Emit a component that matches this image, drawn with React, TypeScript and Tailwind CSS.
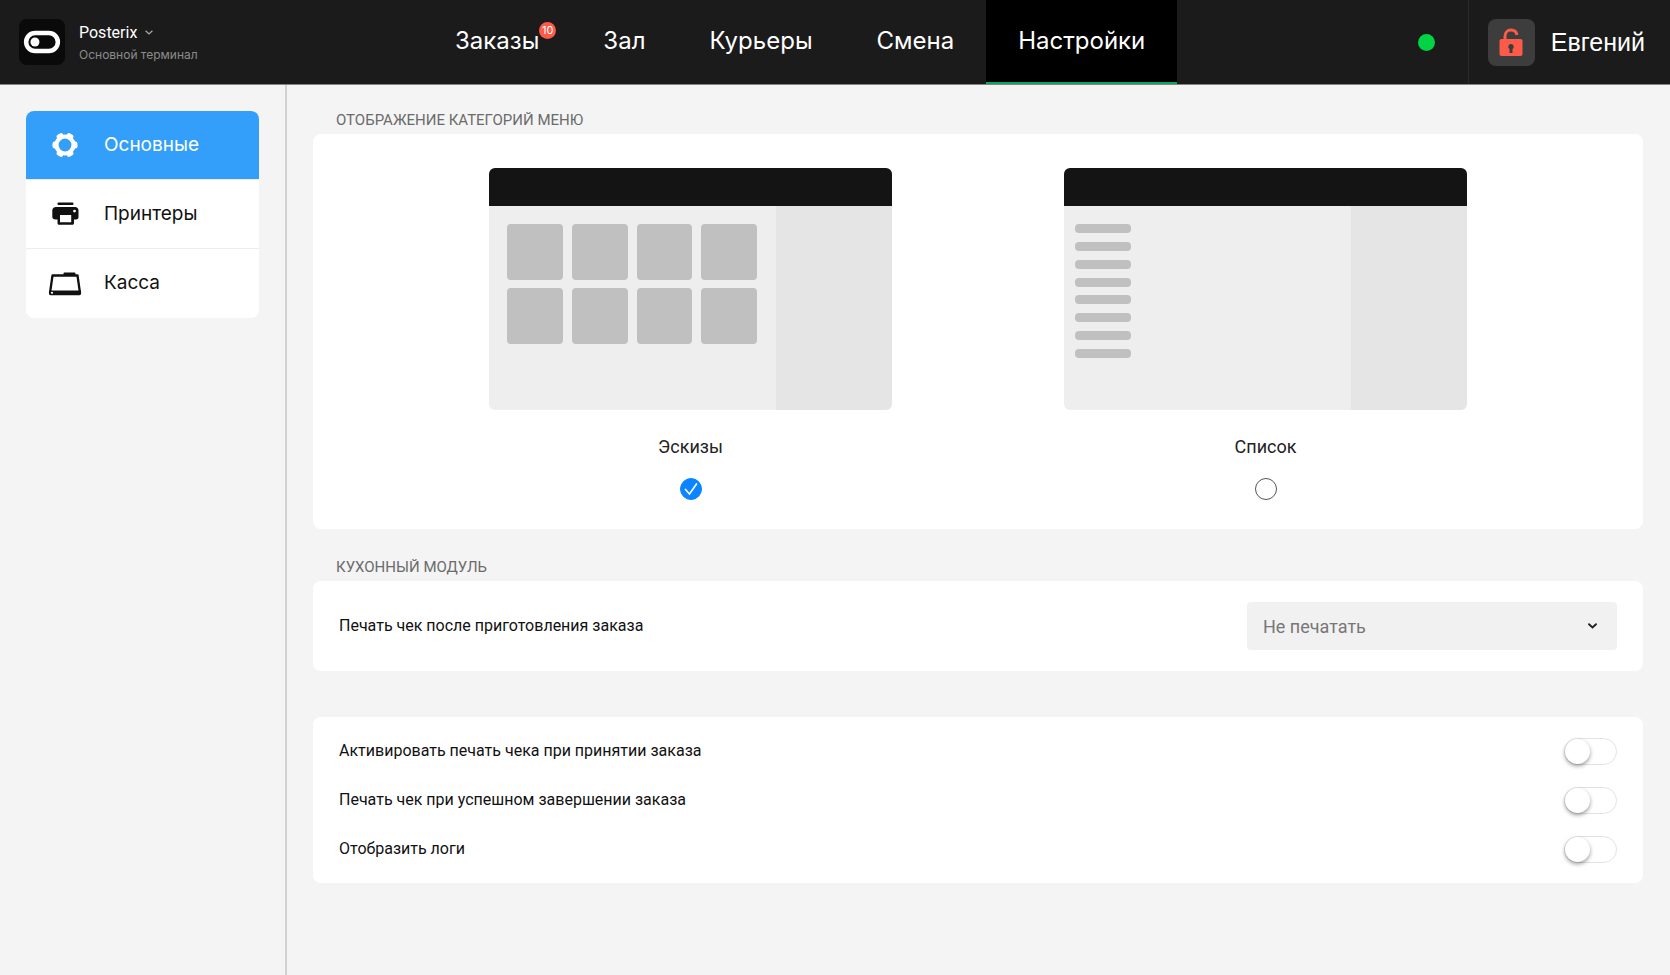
import { useState } from 'react';
import clsx from 'clsx';

const TABS = [
  { id: 'orders', label: 'Заказы', badge: 10 },
  { id: 'hall', label: 'Зал' },
  { id: 'couriers', label: 'Курьеры' },
  { id: 'shift', label: 'Смена' },
  { id: 'settings', label: 'Настройки' },
];

const SECTIONS = [
  { id: 'general', label: 'Основные', Icon: GearIcon },
  { id: 'printers', label: 'Принтеры', Icon: PrinterIcon },
  { id: 'cashbox', label: 'Касса', Icon: CashboxIcon },
];

const TOGGLES = [
  { id: 'print-on-accept', label: 'Активировать печать чека при принятии заказа' },
  { id: 'print-on-finish', label: 'Печать чек при успешном завершении заказа' },
  { id: 'show-logs', label: 'Отобразить логи' },
];

export default function App() {
  return (
    <div className="flex min-h-screen flex-col bg-[#f4f4f4] font-['Roboto','Noto_Sans',sans-serif] text-[#111]">
      <Header />
      <div className="flex flex-1">
        <Sidebar />
        <Settings />
      </div>
    </div>
  );
}

function Header() {
  const [active, setActive] = useState('settings');

  return (
    <header className="flex h-[85px] items-stretch border-b border-[#858585] bg-[#1b1b1b] text-white">
      <div className="flex w-[423px] items-center gap-[14px] pl-[19px]">
        <LogoIcon />
        <div className="flex flex-col items-start pt-0.5">
          <button type="button" className="flex items-center gap-2 text-[16px] leading-6">
            Posterix
            <Chevron className="w-2 text-[#aaa]" />
          </button>
          <span className="font-['Inter',sans-serif] text-[12px] leading-5 text-[#8c8c8c]">Основной терминал</span>
        </div>
      </div>

      <nav className="flex font-['Inter','Noto_Sans',sans-serif]">
        {TABS.map((tab) => (
          <button
            key={tab.id}
            type="button"
            onClick={() => setActive(tab.id)}
            className={clsx(
              'border-b-2 px-8 text-[24px]',
              active === tab.id ? 'border-[#06a763] bg-black' : 'border-transparent'
            )}
          >
            <span className="relative">
              {tab.label}
              {tab.badge && (
                <span className="absolute -top-1 left-full flex size-[17px] items-center justify-center rounded-full bg-[#fb5b48] text-[11px] leading-none">
                  {tab.badge}
                </span>
              )}
            </span>
          </button>
        ))}
      </nav>

      <div className="ml-auto flex items-center">
        <span className="mr-[33px] size-[17px] rounded-full bg-[#00d445]" />
        <div className="flex h-full items-center gap-4 border-l border-[#292929] pr-[25px] pl-[19px]">
          <button
            type="button"
            aria-label="Заблокировать"
            className="flex size-[47px] items-center justify-center rounded-lg bg-[#3d3d3d]"
          >
            <LockIcon />
          </button>
          <span className="pt-0.5 font-['Liberation_Sans',Arial,sans-serif] text-[25px]">Евгений</span>
        </div>
      </div>
    </header>
  );
}

function Sidebar() {
  const [active, setActive] = useState('general');

  return (
    <aside className="w-[287px] shrink-0 border-r-2 border-[#d2d2d2] p-[26px]">
      <nav className="overflow-hidden rounded-lg bg-white font-['Inter','Noto_Sans',sans-serif]">
        {SECTIONS.map(({ id, label, Icon }) => (
          <button
            key={id}
            type="button"
            onClick={() => setActive(id)}
            className={clsx(
              'flex h-[69px] w-full items-center gap-[22px] border-[#ededed] pl-[22px] text-[19px] not-last:border-b',
              active === id ? 'border-[#339ffa] bg-[#339ffa] text-white' : 'text-[#111]'
            )}
          >
            <Icon />
            {label}
          </button>
        ))}
      </nav>
    </aside>
  );
}

function Settings() {
  const [view, setView] = useState('tiles');

  return (
    <main className="flex-1 pt-[21px] pr-[27px] pl-[26px]">
      <SectionTitle>Отображение категорий меню</SectionTitle>
      <div className="flex justify-center gap-[172px] rounded-lg bg-white pt-[34px] pb-[29px]">
        <ViewOption label="Эскизы" value="tiles" checked={view === 'tiles'} onChange={setView}>
          <div className="grid grid-cols-4 content-start gap-x-[9px] gap-y-2 pt-[18px] pr-[19px] pl-[18px]">
            {Array.from({ length: 8 }, (_, i) => (
              <div key={i} className="aspect-square rounded-sm bg-[#c0c0c0]" />
            ))}
          </div>
        </ViewOption>
        <ViewOption label="Список" value="list" checked={view === 'list'} onChange={setView}>
          <div className="flex h-[152px] flex-col justify-between pt-[18px] pl-[11px]">
            {Array.from({ length: 8 }, (_, i) => (
              <div key={i} className="h-[9px] w-14 rounded bg-[#c0c0c0]" />
            ))}
          </div>
        </ViewOption>
      </div>

      <div className="mt-6">
        <SectionTitle>Кухонный модуль</SectionTitle>
        <div className="flex items-center justify-between rounded-lg bg-white px-[26px] py-[21px]">
          <label htmlFor="print-after-cooking" className="text-[16px]">
            Печать чек после приготовления заказа
          </label>
          <div className="grid w-[370px] items-center">
            <select
              id="print-after-cooking"
              className="col-start-1 row-start-1 h-12 appearance-none rounded bg-[#f1f1f1] px-4 text-[18px] text-[#777]"
            >
              <option>Не печатать</option>
            </select>
            <Chevron className="pointer-events-none col-start-1 row-start-1 mr-5 w-[9px] justify-self-end text-[#222]" bold />
          </div>
        </div>
      </div>

      <div className="mt-[46px] flex flex-col gap-px rounded-lg bg-white px-[26px] py-[10px]">
        {TOGGLES.map((toggle) => (
          <div key={toggle.id} className="flex h-12 items-center justify-between">
            <label htmlFor={toggle.id} className="text-[16px]">
              {toggle.label}
            </label>
            <input
              id={toggle.id}
              type="checkbox"
              role="switch"
              className="flex h-[27px] w-[53px] appearance-none rounded-full border border-[#e2e2e2] bg-white before:size-[25px] before:rounded-full before:bg-white before:shadow-[0_2px_4px_rgba(0,0,0,0.4)] checked:justify-end checked:bg-[#339ffa]"
            />
          </div>
        ))}
      </div>
    </main>
  );
}

function SectionTitle({ children }: { children: React.ReactNode }) {
  return <h2 className="pt-0.5 pb-0.5 pl-[23px] text-[15px] leading-6 text-[#6b6b6b] uppercase">{children}</h2>;
}

interface ViewOptionProps {
  label: string;
  value: string;
  checked: boolean;
  onChange: (value: string) => void;
  children: React.ReactNode;
}

function ViewOption({ label, value, checked, onChange, children }: ViewOptionProps) {
  return (
    <label className="flex w-[403px] flex-col items-center">
      <div className="flex h-[242px] w-full flex-col overflow-hidden rounded-md">
        <div className="h-[38px] bg-[#141414]" />
        <div className="flex flex-1">
          <div className="w-[287px] bg-[#eee]">{children}</div>
          <div className="flex-1 bg-[#e5e5e5]" />
        </div>
      </div>
      <span className="mt-[23px] text-[18px] leading-7 text-[#222]">{label}</span>
      <span className="mt-[17px] grid size-[22px] place-items-center">
        <input
          type="radio"
          name="menu-view"
          value={value}
          checked={checked}
          onChange={() => onChange(value)}
          className="col-start-1 row-start-1 size-[22px] appearance-none rounded-full border border-[#555] checked:border-[#0a84ff] checked:bg-[#0a84ff]"
        />
        {checked && (
          <svg viewBox="0 0 22 22" className="pointer-events-none col-start-1 row-start-1 size-[22px]" fill="none">
            <path d="M5.5 11.5 9.5 16 16.5 6" stroke="white" strokeWidth="1.7" strokeLinecap="round" />
          </svg>
        )}
      </span>
    </label>
  );
}

function Chevron({ className, bold }: { className?: string; bold?: boolean }) {
  return (
    <svg viewBox="0 0 9 6" className={className} fill="none">
      <path d="M1 1.2 4.5 4.4 8 1.2" stroke="currentColor" strokeWidth={bold ? 1.9 : 1.4} strokeLinecap="round" />
    </svg>
  );
}

function LogoIcon() {
  return (
    <svg viewBox="0 0 47 47" className="size-[46px]" fill="none">
      <rect width="47" height="47" rx="8" fill="#0a0a0a" />
      <rect x="7.3" y="14.3" width="32.4" height="18.4" rx="9.2" stroke="white" strokeWidth="4.6" />
      <circle cx="16.3" cy="23.5" r="4.6" fill="white" />
    </svg>
  );
}

function LockIcon() {
  return (
    <svg viewBox="0 0 24 28" className="h-7 w-6" fill="none">
      <path d="M6 12V8.5C6 4.500 8.500 2 12 2c3 0 5.400 1.700 6 5" stroke="#fb5b48" strokeWidth="3" />
      <rect x="0.500" y="11" width="23" height="17" rx="2" fill="#fb5b48" />
      <path d="M12 16a2.700 2.700 0 0 1 1.500 5v4h-3v-4A2.700 2.700 0 0 1 12 16Z" fill="#3d3d3d" />
    </svg>
  );
}

function GearIcon() {
  return (
    <svg viewBox="0 0 34 34" className="size-[34px]" fill="none">
      <circle cx="17" cy="17" r="8.500" stroke="currentColor" strokeWidth="4.200" />
      {[0, 60, 120, 180, 240, 300].map((angle) => (
        <rect key={angle} x="24.500" y="13.500" width="5" height="7" rx="2.200" fill="currentColor" transform={`rotate(${angle} 17 17)`} />
      ))}
    </svg>
  );
}

function PrinterIcon() {
  return (
    <svg viewBox="0 0 34 34" className="size-[34px]" fill="currentColor">
      <rect x="9.500" y="5.500" width="16" height="2.600" rx="1" />
      <path
        fillRule="evenodd"
        d="M8 10h19c2.200 0 3.500 1.400 3.500 3.500V20c0 1.600-.8 2.500-2.400 2.500H26V26c0 1.200-.6 1.800-1.800 1.800H11.300c-1.200 0-1.800-.6-1.800-1.800v-3.500H7.400C5.400 22.500 4.300 21.600 4.300 20v-6.500C4.300 11.400 5.800 10 8 10Zm4 8v7.200h11.200V18H12Zm14.500-5.300a1.400 1.400 0 1 0 0 2.800 1.400 1.400 0 0 0 0-2.800Z"
      />
    </svg>
  );
}

function CashboxIcon() {
  return (
    <svg viewBox="0 0 34 34" className="size-[34px]" fill="none">
      <path d="M4.500 8.500h25L32 26H2L4.500 8.500Z" stroke="currentColor" strokeWidth="2.300" strokeLinejoin="round" />
      <path d="M1 23.500h32V26.500c0 1-.6 1.700-1.600 1.700H2.600c-1 0-1.600-.7-1.600-1.700v-3Z" fill="currentColor" />
      <rect x="15.500" y="5.500" width="12" height="2.800" rx="1" fill="currentColor" />
      <circle cx="4" cy="25.800" r="1.100" fill="white" />
    </svg>
  );
}
